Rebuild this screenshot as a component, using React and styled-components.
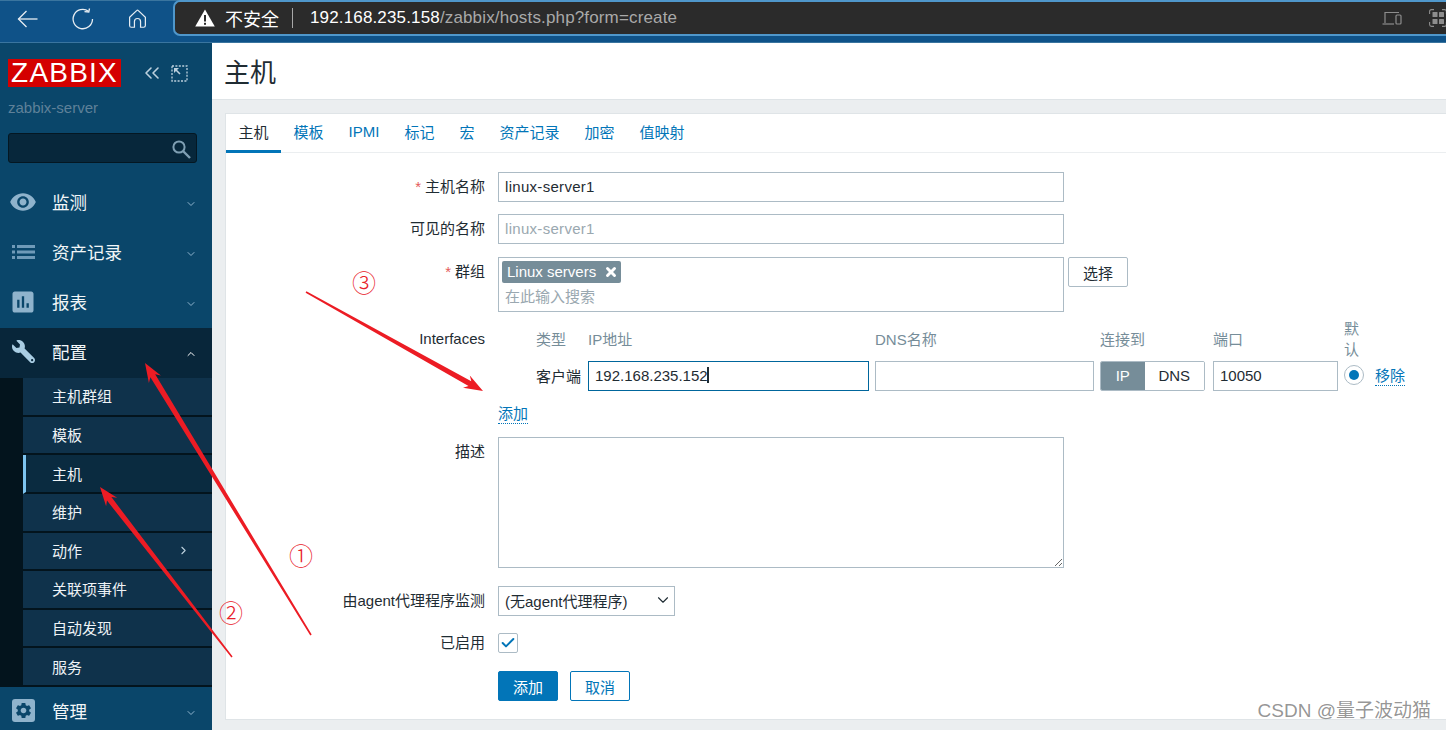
import styled, { createGlobalStyle } from "styled-components";
import { ChevronsLeft, ChevronDown, ChevronUp, ChevronRight, Check, X } from "lucide-react";
import { MdRemoveRedEye, MdAssessment, MdSettings } from "react-icons/md";
import { FaWrench } from "react-icons/fa";

const FONT = `"Liberation Sans", "Noto Sans CJK SC", sans-serif`;

const GlobalStyle = createGlobalStyle`
  html, body {
    margin: 0;
    padding: 0;
    height: 730px;
    overflow: hidden;
    background: #ebeef0;
    font-family: ${FONT};
  }
  * { box-sizing: border-box; }
`;

const Page = styled.div`
  position: relative;
  width: 1446px;
  height: 730px;
  overflow: hidden;
  display: flex;
  flex-direction: column;
`;

const BrowserBar = styled.div`
  height: 43px;
  flex: none;
  display: flex;
  background: #0f5288;
  border-top: 1px solid #3a759f;
  border-bottom: 1px solid #3a759f;
  color: #e8eef3;
`;

const NavButtons = styled.div`
  width: 173px;
  display: flex;
  align-items: center;
  height: 35px;
  padding-left: 15px;
  gap: 32px;
`;

const UrlBox = styled.div`
  flex: 1;
  min-width: 0;
  height: 36px;
  margin-top: -1px;
  background: #2b2b2b;
  border: 2px solid #4f97cb;
  border-right: none;
  border-radius: 7px 0 0 7px;
  display: flex;
  align-items: center;
  padding-left: 20px;
  font-size: 17px;
  color: #fff;
`;

const Insecure = styled.span`
  margin-left: 10px;
  font-size: 18px;
`;

const UrlDivider = styled.span`
  width: 1px;
  height: 20px;
  background: #a8a8a8;
  margin: 0 17px 0 13px;
`;

const UrlHost = styled.span`
  color: #fff;
  letter-spacing: 0.15px;
`;

const UrlPath = styled.span`
  color: #a9a9a9;
  letter-spacing: 0.15px;
`;

const UrlTools = styled.div`
  margin-left: auto;
  display: flex;
  align-items: center;
  gap: 27px;
  margin-right: -1px;
  svg { flex: none; }
`;

const Body = styled.div`
  flex: 1;
  display: flex;
  min-height: 0;
`;

const Sidebar = styled.aside`
  width: 212px;
  flex: none;
  background: #0a466a;
  display: flex;
  flex-direction: column;
  height: 695px;
`;

const LogoRow = styled.div`
  display: flex;
  align-items: center;
  margin: 16px 0 0 8px;
  height: 28px;
`;

const Logo = styled.div`
  width: 113px;
  height: 28px;
  background: #d40000;
  color: #fff;
  font-size: 28px;
  line-height: 28px;
  text-align: center;
  letter-spacing: 1.2px;
  font-family: "Liberation Sans", sans-serif;
`;

const LogoTools = styled.div`
  display: flex;
  align-items: center;
  gap: 7px;
  margin-left: 19px;
  color: #bcd0dd;
`;

const ServerName = styled.div`
  margin: 11px 0 0 8px;
  font-size: 15px;
  line-height: 20px;
  color: #5f8199;
`;

const SearchBox = styled.div`
  margin: 15px 15px 15px 8px;
  height: 30px;
  background: #07273b;
  border: 1px solid #041722;
  border-radius: 3px;
  display: flex;
  align-items: center;
  justify-content: flex-end;
  padding: 2px 5px 0 0;
  color: #7f9fb3;
`;

const MenuItem = styled.div`
  height: 50px;
  flex: none;
  display: flex;
  align-items: center;
  padding: 0 15px 3px 9px;
  background: ${(p) => (p.$open ? "#08263a" : "transparent")};
  color: #f2f6f8;
  font-size: 17.5px;
`;

const MenuIcon = styled.span`
  width: 28px;
  height: 28px;
  margin-right: 15px;
  display: flex;
  align-items: center;
  justify-content: center;
  color: ${(p) => (p.$bright ? "#a9cde3" : "#8fb3cc")};
`;

const MenuArrow = styled.span`
  margin: 4px 0 0 auto;
  display: flex;
  color: ${(p) => (p.$bright ? "#fff" : "#8fb3cc")};
`;

const ListGlyph = styled.span`
  display: flex;
  color: #6f9ab8;
`;

const IconSquare = styled.span`
  width: 23px;
  height: 23px;
  border-radius: 3px;
  background: #8fb3cc;
  color: #0a466a;
  display: flex;
  align-items: center;
  justify-content: center;
`;

const SubMenu = styled.div`
  height: 309px;
  flex: none;
  background: #03141d;
  padding-left: 23px;
  display: flex;
  flex-direction: column;
`;

const SubItem = styled.div`
  flex: 1;
  display: flex;
  align-items: center;
  padding: 0 22px 1px ${(p) => (p.$active ? "26px" : "29px")};
  background: ${(p) => (p.$active ? "#0a2b40" : "#0f324b")};
  border-left: ${(p) => (p.$active ? "3px solid #7dc4ef" : "none")};
  border-bottom: 2px solid #03141d;
  color: #eef3f6;
  font-size: 15px;
`;

const SubArrow = styled.span`
  margin-left: auto;
  display: flex;
  color: #bcd0dd;
`;

const Main = styled.main`
  flex: 1;
  display: flex;
  flex-direction: column;
  min-width: 0;
`;

const Header = styled.header`
  height: 57px;
  flex: none;
  background: #fff;
  border-bottom: 1px solid #dfe4e7;
  padding: 0 0 2px 12px;
  display: flex;
  align-items: center;
  font-size: 26px;
  color: #1f2c33;
`;

const Card = styled.section`
  margin: 13px 0 10px 13px;
  flex: 1;
  background: #fff;
  border: 1px solid #dfe4e7;
  border-right: none;
  display: flex;
  flex-direction: column;
`;

const Tabs = styled.nav`
  height: 39px;
  flex: none;
  display: flex;
  border-bottom: 1px solid #ebeef0;
`;

const Tab = styled.div`
  padding: 0 12.5px 2px;
  height: 39px;
  display: flex;
  align-items: center;
  font-size: 15px;
  color: ${(p) => (p.$active ? "#1f2c33" : "#0275b8")};
  border-bottom: 3px solid ${(p) => (p.$active ? "#0275b8" : "transparent")};
`;

const Form = styled.form`
  padding-top: 19px;
  display: flex;
  flex-direction: column;
`;

const Row = styled.div`
  display: grid;
  grid-template-columns: 259px auto;
  column-gap: 13px;
  align-items: ${(p) => p.$align || "start"};
  margin-bottom: ${(p) => p.$after || 12}px;
`;

const Label = styled.label`
  text-align: right;
  font-size: 15px;
  line-height: 30px;
  color: #1f2c33;
  white-space: nowrap;
`;

const InterfacesLabel = styled(Label)`
  margin-top: 6px;
`;

const Star = styled.span`
  color: #e45959;
  margin-right: 4px;
`;

const TextInput = styled.input`
  display: block;
  width: ${(p) => p.$w || 566}px;
  height: 30px;
  padding: 0 6px 1px;
  border: 1px solid ${(p) => (p.$focus ? "#00669c" : "#acbbc5")};
  border-radius: 0;
  outline: none;
  font-family: ${FONT};
  font-size: 15px;
  letter-spacing: ${(p) => (p.$spaced ? "0.3px" : "0")};
  color: #1f2c33;
  background: #fff;
  &::placeholder { color: #9aa8b0; opacity: 1; }
`;

const GroupLine = styled.div`
  display: flex;
  gap: 4px;
`;

const GroupBox = styled.div`
  width: 566px;
  height: 55px;
  border: 1px solid #acbbc5;
  padding: 3px;
`;

const Chip = styled.span`
  display: inline-flex;
  align-items: center;
  height: 22px;
  padding: 0 3px 1px 5px;
  gap: 8px;
  background: #768d99;
  border-radius: 2px;
  color: #fff;
  font-size: 15px;
`;

const SearchHint = styled.div`
  margin: 5px 0 0 3px;
  font-size: 15px;
  line-height: 18px;
  color: #9aa8b0;
`;

const OutlineButton = styled.button`
  width: 60px;
  height: 30px;
  border: 1px solid #acbbc5;
  border-radius: 2px;
  background: #fff;
  font-family: ${FONT};
  font-size: 15px;
  color: #1f2c33;
  padding: 0;
`;

const Interfaces = styled.div`
  display: grid;
  grid-template-columns: 46px 281px 219px 107px 125px 20px auto;
  column-gap: 6px;
  row-gap: 1px;
  align-items: center;
  padding-left: 38px;
  font-size: 15px;
`;

const HeadCell = styled.div`
  color: #768d99;
  line-height: 21px;
`;

const DefaultHead = styled(HeadCell)`
  width: 16px;
`;

const Cell = styled.div`
  color: #1f2c33;
  white-space: nowrap;
  padding-bottom: 2px;
`;

const Toggle = styled.div`
  display: flex;
  height: 30px;
  width: 105px;
  border: 1px solid #acbbc5;
  border-radius: 2px;
  overflow: hidden;
`;

const ToggleOption = styled.div`
  width: ${(p) => (p.$on ? 44 : 60)}px;
  display: flex;
  align-items: center;
  justify-content: center;
  padding-bottom: 1px;
  background: ${(p) => (p.$on ? "#768d99" : "#fff")};
  color: ${(p) => (p.$on ? "#fff" : "#1f2c33")};
`;

const Radio = styled.span`
  width: 20px;
  height: 20px;
  margin-top: -3px;
  border-radius: 50%;
  border: 1px solid #acbbc5;
  display: flex;
  align-items: center;
  justify-content: center;
  &::after {
    content: "";
    width: 10px;
    height: 10px;
    border-radius: 50%;
    background: #0275b8;
  }
`;

const DottedLink = styled.a`
  color: #0275b8;
  font-size: 15px;
  line-height: 19px;
  display: inline-block;
  justify-self: start;
  border-bottom: 1px dotted #0275b8;
  margin-left: ${(p) => p.$left || 0}px;
`;

const Description = styled.textarea`
  display: block;
  width: 566px;
  height: 131px;
  border: 1px solid #acbbc5;
  border-radius: 0;
  outline: none;
  background: #fff;
`;

const SelectBox = styled.div`
  width: 177px;
  height: 30px;
  border: 1px solid #acbbc5;
  display: flex;
  align-items: center;
  padding: 0 2px 2px 6px;
  font-size: 15px;
  color: #1f2c33;
  white-space: nowrap;
  svg { margin-left: auto; }
`;

const CheckBox = styled.span`
  width: 20px;
  height: 20px;
  display: flex;
  align-items: center;
  justify-content: center;
  border: 1px solid #acbbc5;
  border-radius: 2px;
  color: #0275b8;
`;

const Actions = styled.div`
  display: flex;
  gap: 12px;
`;

const ActionButton = styled.button`
  width: 60px;
  height: 30px;
  padding: 0;
  border: 1px solid #0275b8;
  border-radius: 2px;
  background: ${(p) => (p.$primary ? "#0275b8" : "#fff")};
  color: ${(p) => (p.$primary ? "#fff" : "#0275b8")};
  font-family: ${FONT};
  font-size: 15px;
`;

const Overlay = styled.svg`
  position: absolute;
  left: 0;
  top: 0;
  pointer-events: none;
`;

const Note = styled.span`
  position: absolute;
  left: ${(p) => p.$x}px;
  top: ${(p) => p.$y}px;
  transform: translate(-50%, -50%);
  font-family: "Noto Sans CJK SC", "DejaVu Sans", sans-serif;
  font-weight: 300;
  font-size: 24px;
  line-height: 1;
  color: #e8202a;
`;

const Watermark = styled.span`
  position: absolute;
  right: 15px;
  top: 699px;
  font-size: 19px;
  line-height: 24px;
  color: rgba(90, 90, 90, 0.65);
`;

// tapered hand-drawn style arrow: thin at the tail, fat right behind the head
const arrowPoints = ([x1, y1], [x2, y2]) => {
  const len = Math.hypot(x2 - x1, y2 - y1);
  const ux = (x2 - x1) / len;
  const uy = (y2 - y1) / len;
  const nx = -uy;
  const ny = ux;
  const at = (back, side) => `${(x2 - ux * back + nx * side).toFixed(1)},${(y2 - uy * back + ny * side).toFixed(1)}`;
  return [
    at(len, 0.8),
    at(15, 2.8),
    at(19, 7),
    at(0, 0),
    at(19, -7),
    at(15, -2.8),
    at(len, -0.8),
  ].join(" ");
};

const ARROWS = [
  [[311, 635], [145, 363]],
  [[232, 657], [100, 487]],
  [[306, 292], [483, 391]],
];

const TABS = ["主机", "模板", "IPMI", "标记", "宏", "资产记录", "加密", "值映射"];
const SUB_ITEMS = ["主机群组", "模板", "主机", "维护", "动作", "关联项事件", "自动发现", "服务"];

const BackIcon = () => (
  <svg width="24" height="24" viewBox="0 0 24 24" fill="none" stroke="currentColor" strokeWidth="1.3">
    <path d="M22.5 12H3.5" />
    <path d="M11.5 4L3.5 12L11.5 20" />
  </svg>
);

const RefreshIcon = () => (
  <svg width="24" height="24" viewBox="0 0 24 24" fill="none" stroke="currentColor" strokeWidth="1.3">
    <path d="M21.5 12A9.7 9.7 0 1 1 17.5 4.2" />
    <path d="M18.5 1.5L17.8 5L13.5 4.6" />
  </svg>
);

const HomeIcon = () => (
  <svg width="21" height="21" viewBox="0 0 24 24" fill="none" stroke="currentColor" strokeWidth="1.4">
    <path d="M3 10.5L11 3Q12 2 13 3L21 10.5V20Q21 22 19 22H15.5V15.5Q15.5 12 12 12Q8.5 12 8.5 15.5V22H5Q3 22 3 20Z" />
  </svg>
);

const SearchIcon = () => (
  <svg width="19" height="19" viewBox="0 0 19 19" fill="none" stroke="currentColor">
    <circle cx="7" cy="7" r="5.6" strokeWidth="2" />
    <path d="M11 11L18 18" strokeWidth="2.4" />
  </svg>
);

const ListIcon = () => (
  <svg width="23" height="16" viewBox="0 0 23 16" fill="currentColor">
    <rect x="0" y="1" width="3" height="3" />
    <rect x="5" y="1" width="18" height="3" />
    <rect x="0" y="6.5" width="3" height="3" />
    <rect x="5" y="6.5" width="18" height="3" />
    <rect x="0" y="12" width="3" height="3" />
    <rect x="5" y="12" width="18" height="3" />
  </svg>
);

const WarningIcon = () => (
  <svg width="20" height="18" viewBox="0 0 20 18">
    <path d="M10 0.5 L19.8 17.5 H0.2 Z" fill="#fff" />
    <rect x="9" y="6" width="2" height="6.5" fill="#2b2b2b" />
    <rect x="9" y="13.8" width="2" height="2" fill="#2b2b2b" />
  </svg>
);

const DevicesIcon = () => (
  <svg width="20" height="16" viewBox="0 0 20 16" fill="none" stroke="#8d8d8d" strokeWidth="1.2">
    <path d="M3 13V2.5H17" />
    <path d="M0.5 14H12" />
    <rect x="14" y="5" width="5" height="9" rx="1" />
  </svg>
);

const GridIcon = () => (
  <svg width="18" height="18" viewBox="0 0 18 18" fill="#8d8d8d">
    <rect x="3.5" y="3" width="5" height="5" rx="0.5" />
    <rect x="10" y="3" width="5" height="5" rx="0.5" />
    <rect x="3.5" y="10" width="5" height="5" rx="0.5" />
    <rect x="10" y="10" width="5" height="5" rx="0.5" />
    <path d="M5 0.6H2.5Q0.6 0.6 0.6 2.5V5M0.6 13V15.5Q0.6 17.4 2.5 17.4H5M13 0.6H15.5Q17.4 0.6 17.4 2.5V5M13 17.4H15.5Q17.4 17.4 17.4 15.5V13" fill="none" stroke="#8d8d8d" strokeWidth="1.1" />
  </svg>
);

const KioskIcon = () => (
  <svg width="17" height="17" viewBox="0 0 17 17" fill="none" stroke="currentColor">
    <path d="M1 1H16V16H1Z" strokeDasharray="2 1.4" strokeWidth="1.3" />
    <path d="M3 3H8L3 8Z" fill="currentColor" stroke="none" />
    <path d="M4.5 4.5L9 9" strokeWidth="1.6" />
  </svg>
);

const NavItem = ({ icon, label, open }) => (
  <MenuItem $open={open}>
    <MenuIcon $bright={open}>{icon}</MenuIcon>
    {label}
    <MenuArrow $bright={open}>
      {open ? <ChevronUp size={12} strokeWidth={2} /> : <ChevronDown size={12} strokeWidth={2} />}
    </MenuArrow>
  </MenuItem>
);

export default function App() {
  return (
    <Page>
      <GlobalStyle />
      <BrowserBar>
        <NavButtons>
          <BackIcon />
          <RefreshIcon />
          <HomeIcon />
        </NavButtons>
        <UrlBox>
          <WarningIcon />
          <Insecure>不安全</Insecure>
          <UrlDivider />
          <UrlHost>192.168.235.158</UrlHost>
          <UrlPath>/zabbix/hosts.php?form=create</UrlPath>
          <UrlTools>
            <DevicesIcon />
            <GridIcon />
          </UrlTools>
        </UrlBox>
      </BrowserBar>
      <Body>
        <Sidebar>
          <LogoRow>
            <Logo>ZABBIX</Logo>
            <LogoTools>
              <ChevronsLeft size={24} strokeWidth={1.6} />
              <KioskIcon />
            </LogoTools>
          </LogoRow>
          <ServerName>zabbix-server</ServerName>
          <SearchBox>
            <SearchIcon />
          </SearchBox>
          <NavItem icon={<MdRemoveRedEye size={32} />} label="监测" />
          <NavItem
            icon={
              <ListGlyph>
                <ListIcon />
              </ListGlyph>
            }
            label="资产记录"
          />
          <NavItem icon={<MdAssessment size={28} />} label="报表" />
          <NavItem icon={<FaWrench size={23} style={{ transform: "scaleX(-1)" }} />} label="配置" open />
          <SubMenu>
            {SUB_ITEMS.map((name) => (
              <SubItem key={name} $active={name === "主机"}>
                {name}
                {name === "动作" && (
                  <SubArrow>
                    <ChevronRight size={13} strokeWidth={2} />
                  </SubArrow>
                )}
              </SubItem>
            ))}
          </SubMenu>
          <NavItem
            icon={
              <IconSquare>
                <MdSettings size={19} />
              </IconSquare>
            }
            label="管理"
          />
        </Sidebar>
        <Main>
          <Header>主机</Header>
          <Card>
            <Tabs>
              {TABS.map((t, i) => (
                <Tab key={t} $active={i === 0}>
                  {t}
                </Tab>
              ))}
            </Tabs>
            <Form>
              <Row>
                <Label>
                  <Star>*</Star>主机名称
                </Label>
                <TextInput $spaced readOnly value="linux-server1" />
              </Row>
              <Row $after={13}>
                <Label>可见的名称</Label>
                <TextInput $spaced readOnly placeholder="linux-server1" />
              </Row>
              <Row $after={6}>
                <Label>
                  <Star>*</Star>群组
                </Label>
                <GroupLine>
                  <GroupBox>
                    <Chip>
                      Linux servers
                      <X size={14} strokeWidth={5} />
                    </Chip>
                    <SearchHint>在此输入搜索</SearchHint>
                  </GroupBox>
                  <OutlineButton type="button">选择</OutlineButton>
                </GroupLine>
              </Row>
              <Row $after={13}>
                <InterfacesLabel>Interfaces</InterfacesLabel>
                <div>
                  <Interfaces>
                    <HeadCell>类型</HeadCell>
                    <HeadCell>IP地址</HeadCell>
                    <HeadCell>DNS名称</HeadCell>
                    <HeadCell>连接到</HeadCell>
                    <HeadCell>端口</HeadCell>
                    <DefaultHead>默认</DefaultHead>
                    <span />
                    <Cell>客户端</Cell>
                    <TextInput $w={281} $focus readOnly value="192.168.235.152" />
                    <TextInput $w={219} readOnly />
                    <Toggle>
                      <ToggleOption $on>IP</ToggleOption>
                      <ToggleOption>DNS</ToggleOption>
                    </Toggle>
                    <TextInput $w={125} readOnly value="10050" />
                    <Radio />
                    <DottedLink $left={5}>移除</DottedLink>
                  </Interfaces>
                </div>
              </Row>
              <Row $after={13}>
                <span />
                <div>
                  <DottedLink>添加</DottedLink>
                </div>
              </Row>
              <Row $after={18}>
                <Label>描述</Label>
                <Description readOnly />
              </Row>
              <Row $after={12}>
                <Label>由agent代理程序监测</Label>
                <SelectBox>
                  (无agent代理程序)
                  <ChevronDown size={18} strokeWidth={1.5} />
                </SelectBox>
              </Row>
              <Row $after={13} $align="center">
                <Label>已启用</Label>
                <CheckBox>
                  <Check size={16} strokeWidth={3} />
                </CheckBox>
              </Row>
              <Row>
                <span />
                <Actions>
                  <ActionButton type="button" $primary>
                    添加
                  </ActionButton>
                  <ActionButton type="button">取消</ActionButton>
                </Actions>
              </Row>
            </Form>
          </Card>
        </Main>
      </Body>
      <Overlay width="1446" height="730" viewBox="0 0 1446 730">
        {ARROWS.map(([from, to], i) => (
          <polygon key={i} points={arrowPoints(from, to)} fill="#ec1c24" />
        ))}
        <rect x="707" y="367" width="2" height="16" fill="#1f2c33" />
      </Overlay>
      <Note $x={301} $y={555}>①</Note>
      <Note $x={231} $y={612}>②</Note>
      <Note $x={364} $y={282}>③</Note>
      <Watermark>CSDN @量子波动猫</Watermark>
    </Page>
  );
}
